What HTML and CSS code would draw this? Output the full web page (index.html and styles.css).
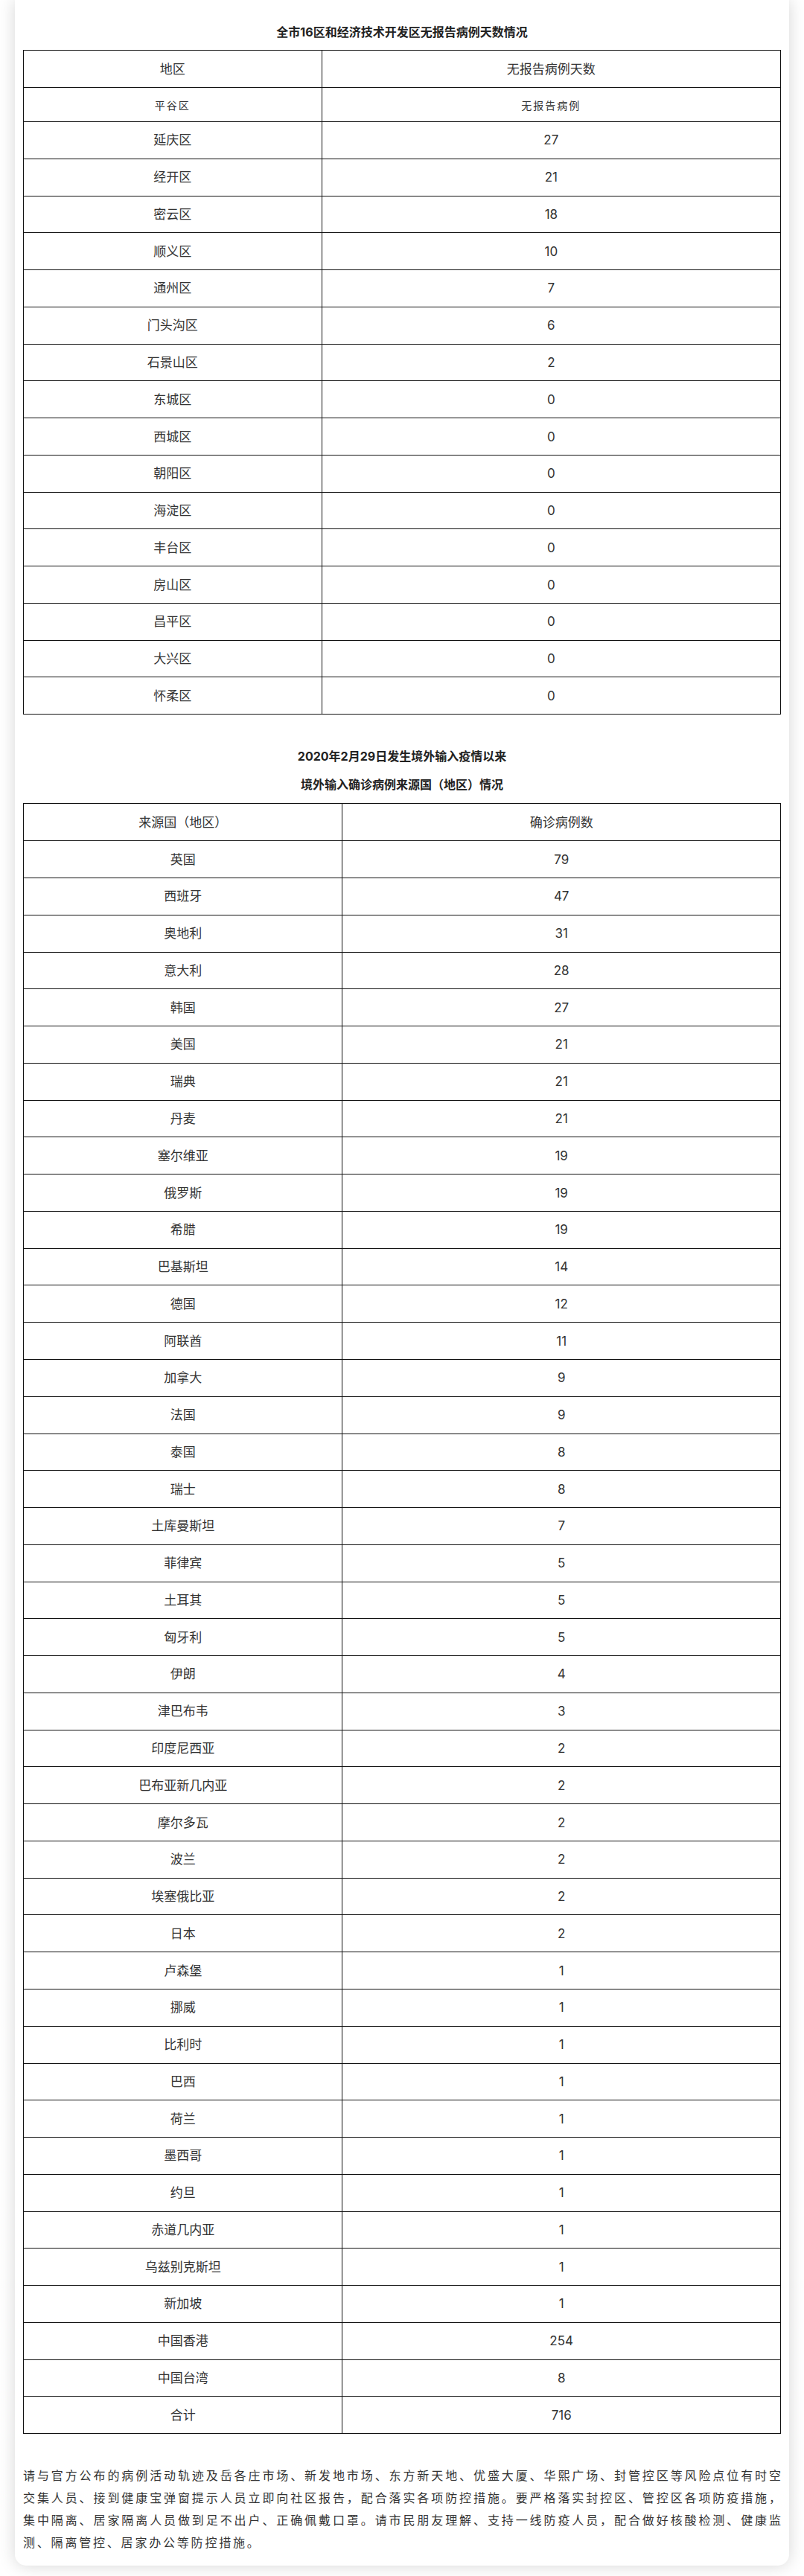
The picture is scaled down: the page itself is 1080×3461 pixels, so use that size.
FILE: index.html
```html
<!DOCTYPE html>
<html lang="zh-CN">
<head>
<meta charset="utf-8">
<title>北京疫情数据</title>
<link rel="stylesheet" href="styles.css">
</head>
<body>
<div class="card">
  <h2 class="title title-first">全市16区和经济技术开发区无报告病例天数情况</h2>
  <table class="data t1">
    <colgroup><col class="c1"><col></colgroup>
    <thead>
      <tr><th>地区</th><th>无报告病例天数</th></tr>
    </thead>
    <tbody>
      <tr class="short"><td><span class="small">平谷区</span></td><td><span class="small">无报告病例</span></td></tr>
      <tr><td>延庆区</td><td>27</td></tr>
      <tr><td>经开区</td><td>21</td></tr>
      <tr><td>密云区</td><td>18</td></tr>
      <tr><td>顺义区</td><td>10</td></tr>
      <tr><td>通州区</td><td>7</td></tr>
      <tr><td>门头沟区</td><td>6</td></tr>
      <tr><td>石景山区</td><td>2</td></tr>
      <tr><td>东城区</td><td>0</td></tr>
      <tr><td>西城区</td><td>0</td></tr>
      <tr><td>朝阳区</td><td>0</td></tr>
      <tr><td>海淀区</td><td>0</td></tr>
      <tr><td>丰台区</td><td>0</td></tr>
      <tr><td>房山区</td><td>0</td></tr>
      <tr><td>昌平区</td><td>0</td></tr>
      <tr><td>大兴区</td><td>0</td></tr>
      <tr><td>怀柔区</td><td>0</td></tr>
    </tbody>
  </table>

  <h2 class="title title-second">2020年2月29日发生境外输入疫情以来</h2>
  <h2 class="title title-third">境外输入确诊病例来源国（地区）情况</h2>
  <table class="data t2">
    <colgroup><col class="c1"><col></colgroup>
    <thead>
      <tr><th>来源国（地区）</th><th>确诊病例数</th></tr>
    </thead>
    <tbody>
      <tr><td>英国</td><td>79</td></tr>
      <tr><td>西班牙</td><td>47</td></tr>
      <tr><td>奥地利</td><td>31</td></tr>
      <tr><td>意大利</td><td>28</td></tr>
      <tr><td>韩国</td><td>27</td></tr>
      <tr><td>美国</td><td>21</td></tr>
      <tr><td>瑞典</td><td>21</td></tr>
      <tr><td>丹麦</td><td>21</td></tr>
      <tr><td>塞尔维亚</td><td>19</td></tr>
      <tr><td>俄罗斯</td><td>19</td></tr>
      <tr><td>希腊</td><td>19</td></tr>
      <tr><td>巴基斯坦</td><td>14</td></tr>
      <tr><td>德国</td><td>12</td></tr>
      <tr><td>阿联酋</td><td>11</td></tr>
      <tr><td>加拿大</td><td>9</td></tr>
      <tr><td>法国</td><td>9</td></tr>
      <tr><td>泰国</td><td>8</td></tr>
      <tr><td>瑞士</td><td>8</td></tr>
      <tr><td>土库曼斯坦</td><td>7</td></tr>
      <tr><td>菲律宾</td><td>5</td></tr>
      <tr><td>土耳其</td><td>5</td></tr>
      <tr><td>匈牙利</td><td>5</td></tr>
      <tr><td>伊朗</td><td>4</td></tr>
      <tr><td>津巴布韦</td><td>3</td></tr>
      <tr><td>印度尼西亚</td><td>2</td></tr>
      <tr><td>巴布亚新几内亚</td><td>2</td></tr>
      <tr><td>摩尔多瓦</td><td>2</td></tr>
      <tr><td>波兰</td><td>2</td></tr>
      <tr><td>埃塞俄比亚</td><td>2</td></tr>
      <tr><td>日本</td><td>2</td></tr>
      <tr><td>卢森堡</td><td>1</td></tr>
      <tr><td>挪威</td><td>1</td></tr>
      <tr><td>比利时</td><td>1</td></tr>
      <tr><td>巴西</td><td>1</td></tr>
      <tr><td>荷兰</td><td>1</td></tr>
      <tr><td>墨西哥</td><td>1</td></tr>
      <tr><td>约旦</td><td>1</td></tr>
      <tr><td>赤道几内亚</td><td>1</td></tr>
      <tr><td>乌兹别克斯坦</td><td>1</td></tr>
      <tr><td>新加坡</td><td>1</td></tr>
      <tr><td>中国香港</td><td>254</td></tr>
      <tr><td>中国台湾</td><td>8</td></tr>
      <tr><td>合计</td><td>716</td></tr>
    </tbody>
  </table>

  <p class="notice">
    <span class="line">请与官方公布的病例活动轨迹及岳各庄市场、新发地市场、东方新天地、优盛大厦、华熙广场、封管控区等风险点位有时空</span>
    <span class="line">交集人员、接到健康宝弹窗提示人员立即向社区报告，配合落实各项防控措施。要严格落实封控区、管控区各项防疫措施，</span>
    <span class="line">集中隔离、居家隔离人员做到足不出户、正确佩戴口罩。请市民朋友理解、支持一线防疫人员，配合做好核酸检测、健康监</span>
    <span class="line last">测、隔离管控、居家办公等防控措施。</span>
  </p>
</div>
</body>
</html>
```

FILE: styles.css
```css
html, body {
  margin: 0;
  padding: 0;
  background: #ffffff;
}

body {
  font-family: Inter, "Noto Sans CJK SC", "Noto Sans", sans-serif;
  color: #333333;
}

.card {
  margin: 0 20px 15px;
  padding: 31px 11px 16px;
  background: #ffffff;
  border-radius: 0 0 15px 15px;
  box-shadow: 0 0 22px rgba(0, 0, 0, 0.17);
}

.title {
  margin: 0;
  font-size: 16px;
  line-height: 24px;
  font-weight: 700;
  text-align: center;
  color: #222222;
}

.title-first {
  margin-bottom: 12px;
}

.title-second {
  margin-top: 44px;
}

.title-third {
  margin-top: 14px;
  margin-bottom: 13px;
}

.data {
  width: 100%;
  border-collapse: collapse;
  table-layout: fixed;
  font-size: 17px;
  color: #333333;
}

.t1 .c1 {
  width: 400.7px;
}

.t2 .c1 {
  width: 428.4px;
}

.data th,
.data td {
  border: 1px solid #111111;
  padding: 0;
  height: 48.77px;
  text-align: center;
  vertical-align: middle;
  font-weight: 400;
  line-height: 20px;
}

.data thead th {
  height: 49px;
}

.data tr.short td {
  height: 45px;
}

.small {
  font-size: 14px;
  letter-spacing: 2px;
  line-height: 16px;
}

.notice {
  margin: 41px 0 0;
  font-size: 16px;
  line-height: 30px;
  color: #333333;
}

.notice .line {
  display: block;
  white-space: nowrap;
  text-align: justify;
  text-align-last: justify;
}

.notice .line.last {
  text-align: left;
  text-align-last: left;
  letter-spacing: 2.8px;
}
```
